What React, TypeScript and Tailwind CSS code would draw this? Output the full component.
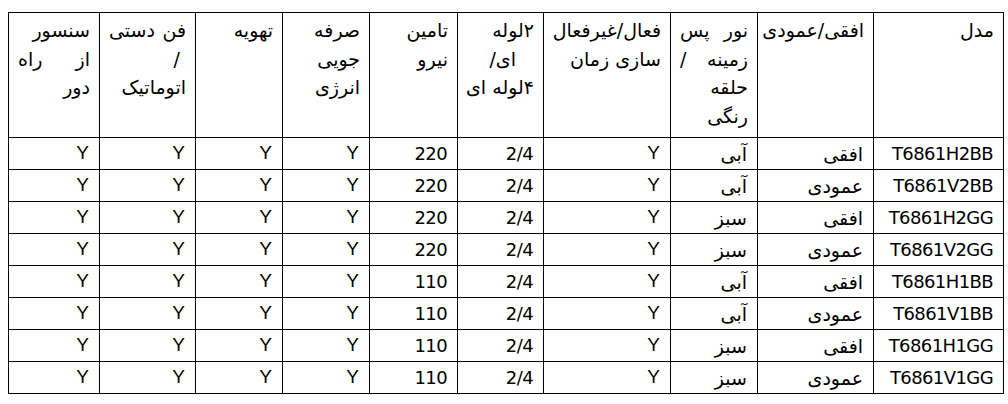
import React from 'react';

const colWidths = [130, 116, 87, 127, 86, 88, 87, 87, 96, 91];

const rows = [
  ['T6861H2BB', 'افقی', 'آبی', '220'],
  ['T6861V2BB', 'عمودی', 'آبی', '220'],
  ['T6861H2GG', 'افقی', 'سبز', '220'],
  ['T6861V2GG', 'عمودی', 'سبز', '220'],
  ['T6861H1BB', 'افقی', 'آبی', '110'],
  ['T6861V1BB', 'عمودی', 'آبی', '110'],
  ['T6861H1GG', 'افقی', 'سبز', '110'],
  ['T6861V1GG', 'عمودی', 'سبز', '110'],
];

// a wrapped line that is justified edge to edge
const Spread: React.FC<{ words: string[] }> = ({ words }) => (
  <div className="flex justify-between">
    {words.map((w, i) => (
      <span key={i}>{w}</span>
    ))}
  </div>
);

const th = 'border border-black align-top text-right px-[9px] pt-[3px] font-normal whitespace-nowrap';
const td = 'border border-black align-middle text-right px-[10px] h-[32px] p-0';
const persian = "font-['DejaVu_Sans',sans-serif] text-[19px] leading-none pt-[2px]";
const latin = "font-['DejaVu_Sans',sans-serif] text-[18px] tracking-[-0.6px]";
const yes = "font-['Liberation_Sans',Arial,sans-serif] text-[19px]";

const App: React.FC = () => {
  return (
    <div className="w-[1008px] h-[404px] bg-white pt-[12px] pl-[8px]">
      <table
        dir="rtl"
        className="table-fixed border-collapse w-[995px] text-black"
      >
        <colgroup>
          {colWidths.map((w, i) => (
            <col key={i} style={{ width: w }} />
          ))}
        </colgroup>
        <thead>
          <tr className="h-[125px] font-['DejaVu_Sans',sans-serif] text-[19px] leading-[28.5px]">
            <th className={th}>مدل</th>
            <th className={th}>افقی/عمودی</th>
            <th className={th}>
              <Spread words={['نور', 'پس']} />
              <Spread words={['زمینه', '/']} />
              <div>حلقه</div>
              <div>رنگی</div>
            </th>
            <th className={th}>
              <div>فعال/غیرفعال</div>
              <div>سازی زمان</div>
            </th>
            <th className={th}>
              <div>۲لوله</div>
              <div className="pr-[18px]">ای/</div>
              <div>۴لوله ای</div>
            </th>
            <th className={th}>
              <div>تامین</div>
              <div>نیرو</div>
            </th>
            <th className={th}>
              <div>صرفه</div>
              <div>جویی</div>
              <div>انرژی</div>
            </th>
            <th className={th}>تهویه</th>
            <th className={th}>
              <Spread words={['فن', 'دستی']} />
              <div className="pr-[6px]">/</div>
              <div>اتوماتیک</div>
            </th>
            <th className={th}>
              <div>سنسور</div>
              <Spread words={['از', 'راه']} />
              <div>دور</div>
            </th>
          </tr>
        </thead>
        <tbody>
          {rows.map(([model, dirName, color, volt]) => (
            <tr key={model}>
              <td className={`${td} ${latin}`}>{model}</td>
              <td className={`${td} ${persian}`}>{dirName}</td>
              <td className={`${td} ${persian}`}>{color}</td>
              <td className={`${td} ${yes}`}>Y</td>
              <td className={`${td} ${latin}`}>2/4</td>
              <td className={`${td} ${latin}`}>{volt}</td>
              <td className={`${td} ${yes}`}>Y</td>
              <td className={`${td} ${yes}`}>Y</td>
              <td className={`${td} ${yes}`}>Y</td>
              <td className={`${td} ${yes}`}>Y</td>
            </tr>
          ))}
        </tbody>
      </table>
    </div>
  );
};

export default App;
